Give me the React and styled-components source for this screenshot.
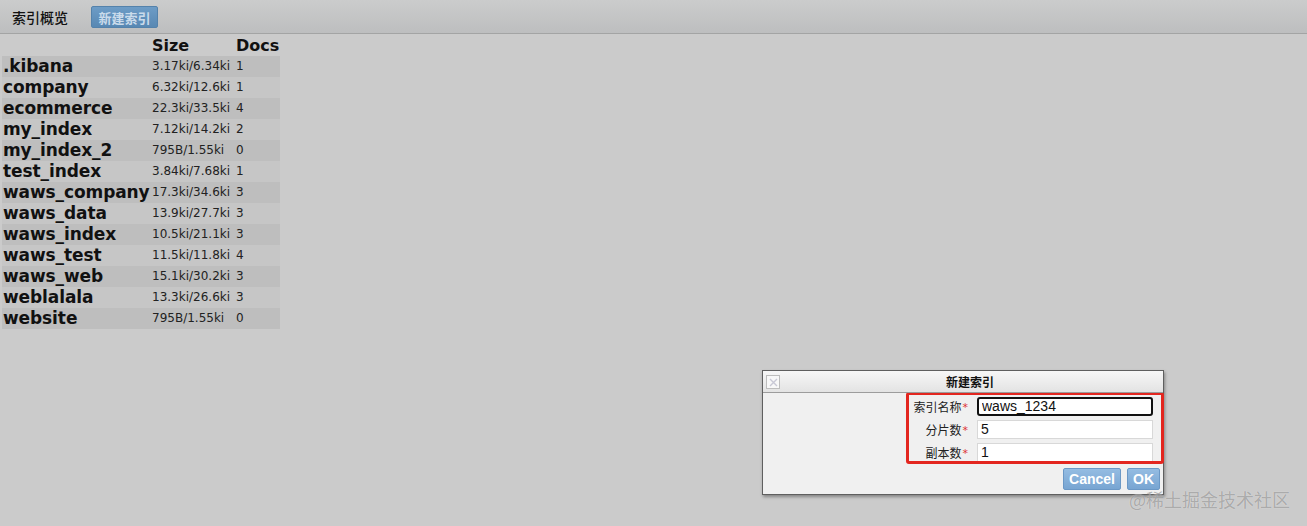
import React from "react";
import styled, { createGlobalStyle } from "styled-components";

const indices = [
	{ name: ".kibana", size: "3.17ki/6.34ki", docs: "1" },
	{ name: "company", size: "6.32ki/12.6ki", docs: "1" },
	{ name: "ecommerce", size: "22.3ki/33.5ki", docs: "4" },
	{ name: "my_index", size: "7.12ki/14.2ki", docs: "2" },
	{ name: "my_index_2", size: "795B/1.55ki", docs: "0" },
	{ name: "test_index", size: "3.84ki/7.68ki", docs: "1" },
	{ name: "waws_company", size: "17.3ki/34.6ki", docs: "3" },
	{ name: "waws_data", size: "13.9ki/27.7ki", docs: "3" },
	{ name: "waws_index", size: "10.5ki/21.1ki", docs: "3" },
	{ name: "waws_test", size: "11.5ki/11.8ki", docs: "4" },
	{ name: "waws_web", size: "15.1ki/30.2ki", docs: "3" },
	{ name: "weblalala", size: "13.3ki/26.6ki", docs: "3" },
	{ name: "website", size: "795B/1.55ki", docs: "0" },
];

const fields = [
	{ label: "索引名称", value: "waws_1234", focused: true },
	{ label: "分片数", value: "5" },
	{ label: "副本数", value: "1" },
];

function App() {
	return (
		<>
			<GlobalStyle />
			<Page>
				<Toolbar>
					<ToolbarTitle>索引概览</ToolbarTitle>
					<ToolbarButton>新建索引</ToolbarButton>
				</Toolbar>

				<Content>
					<IndexTable>
						<HeadCell />
						<HeadCell>Size</HeadCell>
						<HeadCell>Docs</HeadCell>
						{indices.map((row, i) => (
							<Row key={row.name} $odd={i % 2 === 0}>
								<NameCell>{row.name}</NameCell>
								<SizeCell>{row.size}</SizeCell>
								<SizeCell>{row.docs}</SizeCell>
							</Row>
						))}
					</IndexTable>
				</Content>

				<Dialog>
					<DialogTitle>
						<CloseButton>
							<svg width="9" height="9" viewBox="0 0 9 9">
								<path d="M1 1 L8 8 M8 1 L1 8" stroke="#c9c9d6" strokeWidth="1.4" />
							</svg>
						</CloseButton>
						新建索引
					</DialogTitle>
					<DialogBody>
						<Highlight>
							{fields.map((f) => (
								<FieldRow key={f.label}>
									<FieldLabel>
										{f.label}
										<Required>*</Required>
									</FieldLabel>
									<FieldInput $focused={f.focused} defaultValue={f.value} />
								</FieldRow>
							))}
						</Highlight>
					</DialogBody>
					<DialogFooter>
						<DialogButton>Cancel</DialogButton>
						<DialogButton>OK</DialogButton>
					</DialogFooter>
				</Dialog>

				<Watermark>@稀土掘金技术社区</Watermark>
			</Page>
		</>
	);
}

const GlobalStyle = createGlobalStyle`
	html, body {
		margin: 0;
		padding: 0;
		background: #cbcbcb;
	}
	body {
		font-family: "DejaVu Sans", Verdana, "Noto Sans CJK SC", sans-serif;
	}
`;

const Page = styled.div`
	position: relative;
	width: 1307px;
	height: 526px;
	overflow: hidden;
	background: #cbcbcb;
`;

const Toolbar = styled.div`
	height: 33px;
	display: flex;
	align-items: center;
	padding-left: 12px;
	background: linear-gradient(#cbcccc, #bdbebf);
	border-bottom: 1px solid #a3a4a4;
	font-family: "Noto Sans CJK SC", sans-serif;
`;

const ToolbarTitle = styled.span`
	font-size: 14px;
	font-weight: 500;
	color: #111;
	width: 79px;
`;

const ToolbarButton = styled.button`
	height: 22px;
	width: 67px;
	padding: 0;
	border: 1px solid #5482ab;
	border-radius: 2px;
	background: linear-gradient(#6d9cc6, #5888b3);
	color: #cadbeb;
	font-family: "Noto Sans CJK SC", sans-serif;
	font-size: 13px;
	font-weight: 700;
	margin-top: 1px;
`;

const Content = styled.div`
	padding: 2px 0 0 2px;
	height: 482px;
	box-sizing: border-box;
`;

const IndexTable = styled.div`
	display: grid;
	grid-template-columns: 150px 84px 44px;
	width: 278px;
	color: #111;
`;

const HeadCell = styled.div`
	font-size: 16px;
	font-weight: 700;
	height: 20px;
	line-height: 19px;
`;

const Row = styled.div`
	display: contents;
	& > div {
		background: ${(p) => (p.$odd ? "#bebebe" : "#c6c6c6")};
	}
`;

const NameCell = styled.div`
	font-size: 17px;
	font-weight: 700;
	height: 21px;
	line-height: 21px;
	padding-left: 1px;
	white-space: nowrap;
	letter-spacing: -0.1px;
`;

const SizeCell = styled.div`
	font-size: 12px;
	height: 21px;
	line-height: 20px;
	color: #222;
	white-space: nowrap;
`;

const Dialog = styled.div`
	position: absolute;
	left: 762px;
	top: 370px;
	width: 400px;
	height: 123px;
	background: #f0f0f0;
	border: 1px solid #5f5f5f;
	box-shadow: 1px 2px 3px rgba(0, 0, 0, 0.35);
	display: flex;
	flex-direction: column;
`;

const DialogTitle = styled.div`
	position: relative;
	height: 21px;
	line-height: 22px;
	text-align: center;
	padding-left: 14px;
	font-family: "Noto Sans CJK SC", sans-serif;
	font-size: 12px;
	font-weight: 700;
	color: #111;
	background: linear-gradient(#f7f7f7, #e3e3e3);
	border-bottom: 1px solid #9c9c9c;
`;

const CloseButton = styled.span`
	position: absolute;
	left: 3px;
	top: 4px;
	width: 12px;
	height: 12px;
	border: 1px solid #bdbdbd;
	background: #f8f8f8;
	display: flex;
	align-items: center;
	justify-content: center;
`;

const DialogBody = styled.div`
	display: flex;
	justify-content: flex-end;
	margin-top: -1px;
`;

const Highlight = styled.div`
	width: 244px;
	height: 64px;
	border: 3px solid #e3261f;
	border-radius: 3px;
	padding: 2px 5px 0 3px;
	overflow: hidden;
	display: flex;
	flex-direction: column;
	gap: 4px;
	margin-right: -1px;
`;

const FieldRow = styled.div`
	display: flex;
	align-items: center;
	gap: 9px;
`;

const FieldLabel = styled.label`
	width: 56px;
	text-align: right;
	font-family: "Noto Sans CJK SC", sans-serif;
	font-size: 12px;
	color: #222;
	white-space: nowrap;
`;

const Required = styled.span`
	color: #d33;
	font-family: "DejaVu Sans", sans-serif;
	font-size: 11px;
	vertical-align: 1px;
	margin-left: 1px;
`;

const FieldInput = styled.input`
	width: 176px;
	height: 19px;
	box-sizing: border-box;
	padding: 0 3px 2px;
	background: #fff;
	border: ${(p) => (p.$focused ? "2px solid #111" : "1px solid #d8d8d8")};
	border-radius: ${(p) => (p.$focused ? "3px" : "0")};
	font-family: "Liberation Sans", Arial, sans-serif;
	font-size: 14px;
	line-height: 14px;
	color: #111;
	outline: none;
`;

const DialogFooter = styled.div`
	display: flex;
	justify-content: flex-end;
	gap: 6px;
	padding: 4px 3px 0 0;
`;

const DialogButton = styled.button`
	height: 22px;
	padding: 0 5px;
	border: 1px solid #6b98c6;
	border-radius: 2px;
	background: linear-gradient(#94bce2, #78a5d2);
	color: #fff;
	font-family: "Liberation Sans", Arial, sans-serif;
	font-size: 14px;
	font-weight: 700;
`;

const Watermark = styled.div`
	position: absolute;
	left: 1129px;
	top: 486px;
	font-family: "Noto Sans CJK SC", sans-serif;
	font-size: 18px;
	color: rgba(120, 120, 120, 0.55);
	text-shadow: 0 0 1px rgba(255, 255, 255, 0.6);
`;

export default App;
